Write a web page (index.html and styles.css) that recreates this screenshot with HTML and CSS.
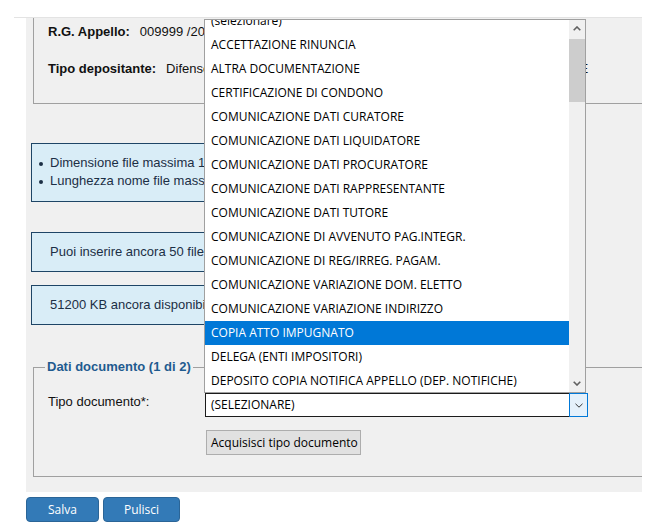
FILE: index.html
```html
<!DOCTYPE html>
<html lang="it">
<head>
    <meta charset="UTF-8">
    <meta name="viewport" content="width=device-width, initial-scale=1.0">
    <title>Deposito documenti</title>
    <link rel="stylesheet" href="styles.css">
</head>
<body>
    <div class="page">
        <div class="panel">
            <fieldset class="summary">
                <div class="field"><span class="field-label">R.G. Appello:</span><span>009999 /2024</span></div>
                <div class="field"><span class="field-label">Tipo depositante:</span><span>Difensore del contribuente - professionista abilitato alla difesa tecnica – E</span></div>
            </fieldset>

            <div class="notice notice-first">
                <ul>
                    <li>Dimensione file massima 10 MB</li>
                    <li>Lunghezza nome file massima 100 caratteri</li>
                </ul>
            </div>
            <div class="notice notice-second">Puoi inserire ancora 50 file</div>
            <div class="notice notice-third">51200 KB ancora disponibili</div>

            <fieldset class="doc">
                <legend>Dati documento (1 di 2)</legend>
                <div class="doc-row">
                    <label for="tipoDocumento">Tipo documento*:</label>
                    <div class="select" id="tipoDocumento">
                        <span class="select-value">(SELEZIONARE)</span>
                        <span class="select-arrow">
                            <svg width="8" height="5" viewBox="0 0 8 5"><path d="M0.5 0.8 L4 4.2 L7.5 0.8" stroke="#333" stroke-width="1" fill="none"/></svg>
                        </span>
                    </div>
                </div>
                <div class="doc-row doc-actions">
                    <button type="button" class="btn-light">Acquisisci tipo documento</button>
                </div>
            </fieldset>
        </div>

        <div class="actions">
            <button type="button" class="btn-primary btn-save">Salva</button>
            <button type="button" class="btn-primary btn-clear">Pulisci</button>
        </div>

        <!-- open list of the document type select -->
        <div class="dropdown">
            <div class="options">
                <div class="option">(selezionare)</div>
                <div class="option">ACCETTAZIONE RINUNCIA</div>
                <div class="option">ALTRA DOCUMENTAZIONE</div>
                <div class="option">CERTIFICAZIONE DI CONDONO</div>
                <div class="option">COMUNICAZIONE DATI CURATORE</div>
                <div class="option">COMUNICAZIONE DATI LIQUIDATORE</div>
                <div class="option">COMUNICAZIONE DATI PROCURATORE</div>
                <div class="option">COMUNICAZIONE DATI RAPPRESENTANTE</div>
                <div class="option">COMUNICAZIONE DATI TUTORE</div>
                <div class="option">COMUNICAZIONE DI AVVENUTO PAG.INTEGR.</div>
                <div class="option">COMUNICAZIONE DI REG/IRREG. PAGAM.</div>
                <div class="option">COMUNICAZIONE VARIAZIONE DOM. ELETTO</div>
                <div class="option">COMUNICAZIONE VARIAZIONE INDIRIZZO</div>
                <div class="option selected">COPIA ATTO IMPUGNATO</div>
                <div class="option">DELEGA (ENTI IMPOSITORI)</div>
                <div class="option">DEPOSITO COPIA NOTIFICA APPELLO (DEP. NOTIFICHE)</div>
            </div>
            <div class="scrollbar">
                <div class="scroll-btn">
                    <svg width="8" height="5" viewBox="0 0 8 5"><path d="M0.7 4.3 L4 1 L7.3 4.3" stroke="#606060" stroke-width="1.6" fill="none"/></svg>
                </div>
                <div class="scroll-thumb"></div>
                <div class="scroll-track"></div>
                <div class="scroll-btn">
                    <svg width="8" height="5" viewBox="0 0 8 5"><path d="M0.7 0.7 L4 4 L7.3 0.7" stroke="#606060" stroke-width="1.6" fill="none"/></svg>
                </div>
            </div>
        </div>
    </div>
</body>
</html>
```

FILE: styles.css
```css
body {
    margin: 0;
    font-family: "Liberation Sans", Arial, sans-serif;
    font-size: 13px;
    color: #111;
    background: #fff;
}
.page {
    position: relative;
    width: 628px;
    margin: 17px 0 0 14px;
    border-top: 1px solid #e3e3e3;
}
.panel {
    margin-left: 12px;
    padding-bottom: 15px;
    background: #f0f0f0;
    overflow: hidden;
}

/* appeal summary */
.summary {
    width: 700px;
    margin: 0 0 0 7px;
    padding: 4px 0 24px 14px;
    border: 1px solid #a0a0a0;
    border-top: none;
}
.field {
    display: flex;
    height: 20px;
    line-height: 20px;
    white-space: nowrap;
}
.field + .field {
    margin-top: 17px;
}
.field-label {
    font-weight: bold;
    margin-right: 10px;
}

/* info boxes */
.notice {
    width: 522px;
    margin-left: 5px;
    padding: 10px 0 10px 18px;
    border: 1px solid #1e4566;
    background: #d9edf7;
    color: #1c2f45;
    line-height: 18px;
    white-space: nowrap;
}
.notice-first {
    margin-top: 39px;
    padding-bottom: 11px;
}
.notice-second {
    margin-top: 30px;
}
.notice-third {
    margin-top: 13px;
}
.notice ul {
    list-style: none;
    margin: 0;
    padding: 0;
}
.notice li::before {
    content: "";
    display: inline-block;
    width: 4px;
    height: 4px;
    margin: 0 7px 0 -11px;
    border-radius: 50%;
    background: #1c2f45;
    vertical-align: middle;
}

/* document data */
.doc {
    width: 700px;
    margin: 34px 0 0 7px;
    padding: 18px 0 21px 14px;
    border: 1px solid #a0a0a0;
}
.doc legend {
    margin-left: -3px;
    padding: 0 2px;
    font-weight: bold;
    line-height: 16px;
    color: #1f5b8f;
}
.doc-row {
    display: flex;
}
.doc-row label {
    width: 157px;
    line-height: 18px;
}
.doc-actions {
    margin-top: 13px;
    padding-left: 158px;
}
.select {
    display: flex;
    width: 383px;
    height: 24px;
    box-sizing: border-box;
    border: 1px solid #1b1b1b;
    background: #fff;
    font-family: "Open Sans", sans-serif;
    font-size: 12px;
}
.select-value {
    flex: 1;
    padding-left: 5px;
    line-height: 22px;
    color: #000;
}
.select-arrow {
    display: flex;
    align-items: center;
    justify-content: center;
    width: 17px;
    margin: -1px -1px -1px 0;
    border: 1px solid #0078d7;
    background: #e5f1fb;
}
.btn-light {
    width: 155px;
    height: 25px;
    padding: 0 4px;
    border: 1px solid #adadad;
    background: #e1e1e1;
    font-family: "Open Sans", sans-serif;
    font-size: 12px;
    color: #000;
    text-align: left;
    white-space: nowrap;
}

/* bottom buttons */
.actions {
    display: flex;
    gap: 4px;
    margin: 5px 0 0 12px;
}
.btn-primary {
    height: 25px;
    padding: 0;
    border: 1px solid #2b6597;
    border-radius: 4px;
    background: #337ab7;
    color: #fff;
    font-family: "Open Sans", sans-serif;
    font-size: 12px;
}
.btn-save {
    width: 73px;
}
.btn-clear {
    width: 77px;
}

/* dropdown list */
.dropdown {
    position: absolute;
    top: 1px;
    left: 190px;
    display: flex;
    width: 382px;
    height: 374px;
    box-sizing: border-box;
    border: 1px solid #a0a0a0;
    background: #fff;
    overflow: hidden;
    font-family: "Open Sans", sans-serif;
    font-size: 12px;
    color: #000;
}
.options {
    flex: 1;
    margin-top: -11px;
    overflow: hidden;
}
.option {
    height: 24px;
    line-height: 24px;
    padding-left: 6px;
    white-space: nowrap;
}
.option.selected {
    background: #0078d7;
    color: #fff;
}
.scrollbar {
    display: flex;
    flex-direction: column;
    width: 16px;
    background: #f0f0f0;
}
.scroll-btn {
    display: flex;
    align-items: center;
    justify-content: center;
    height: 17px;
}
.scroll-thumb {
    height: 63px;
    margin-top: 2px;
    background: #cdcdcd;
}
.scroll-track {
    flex: 1;
}
```
